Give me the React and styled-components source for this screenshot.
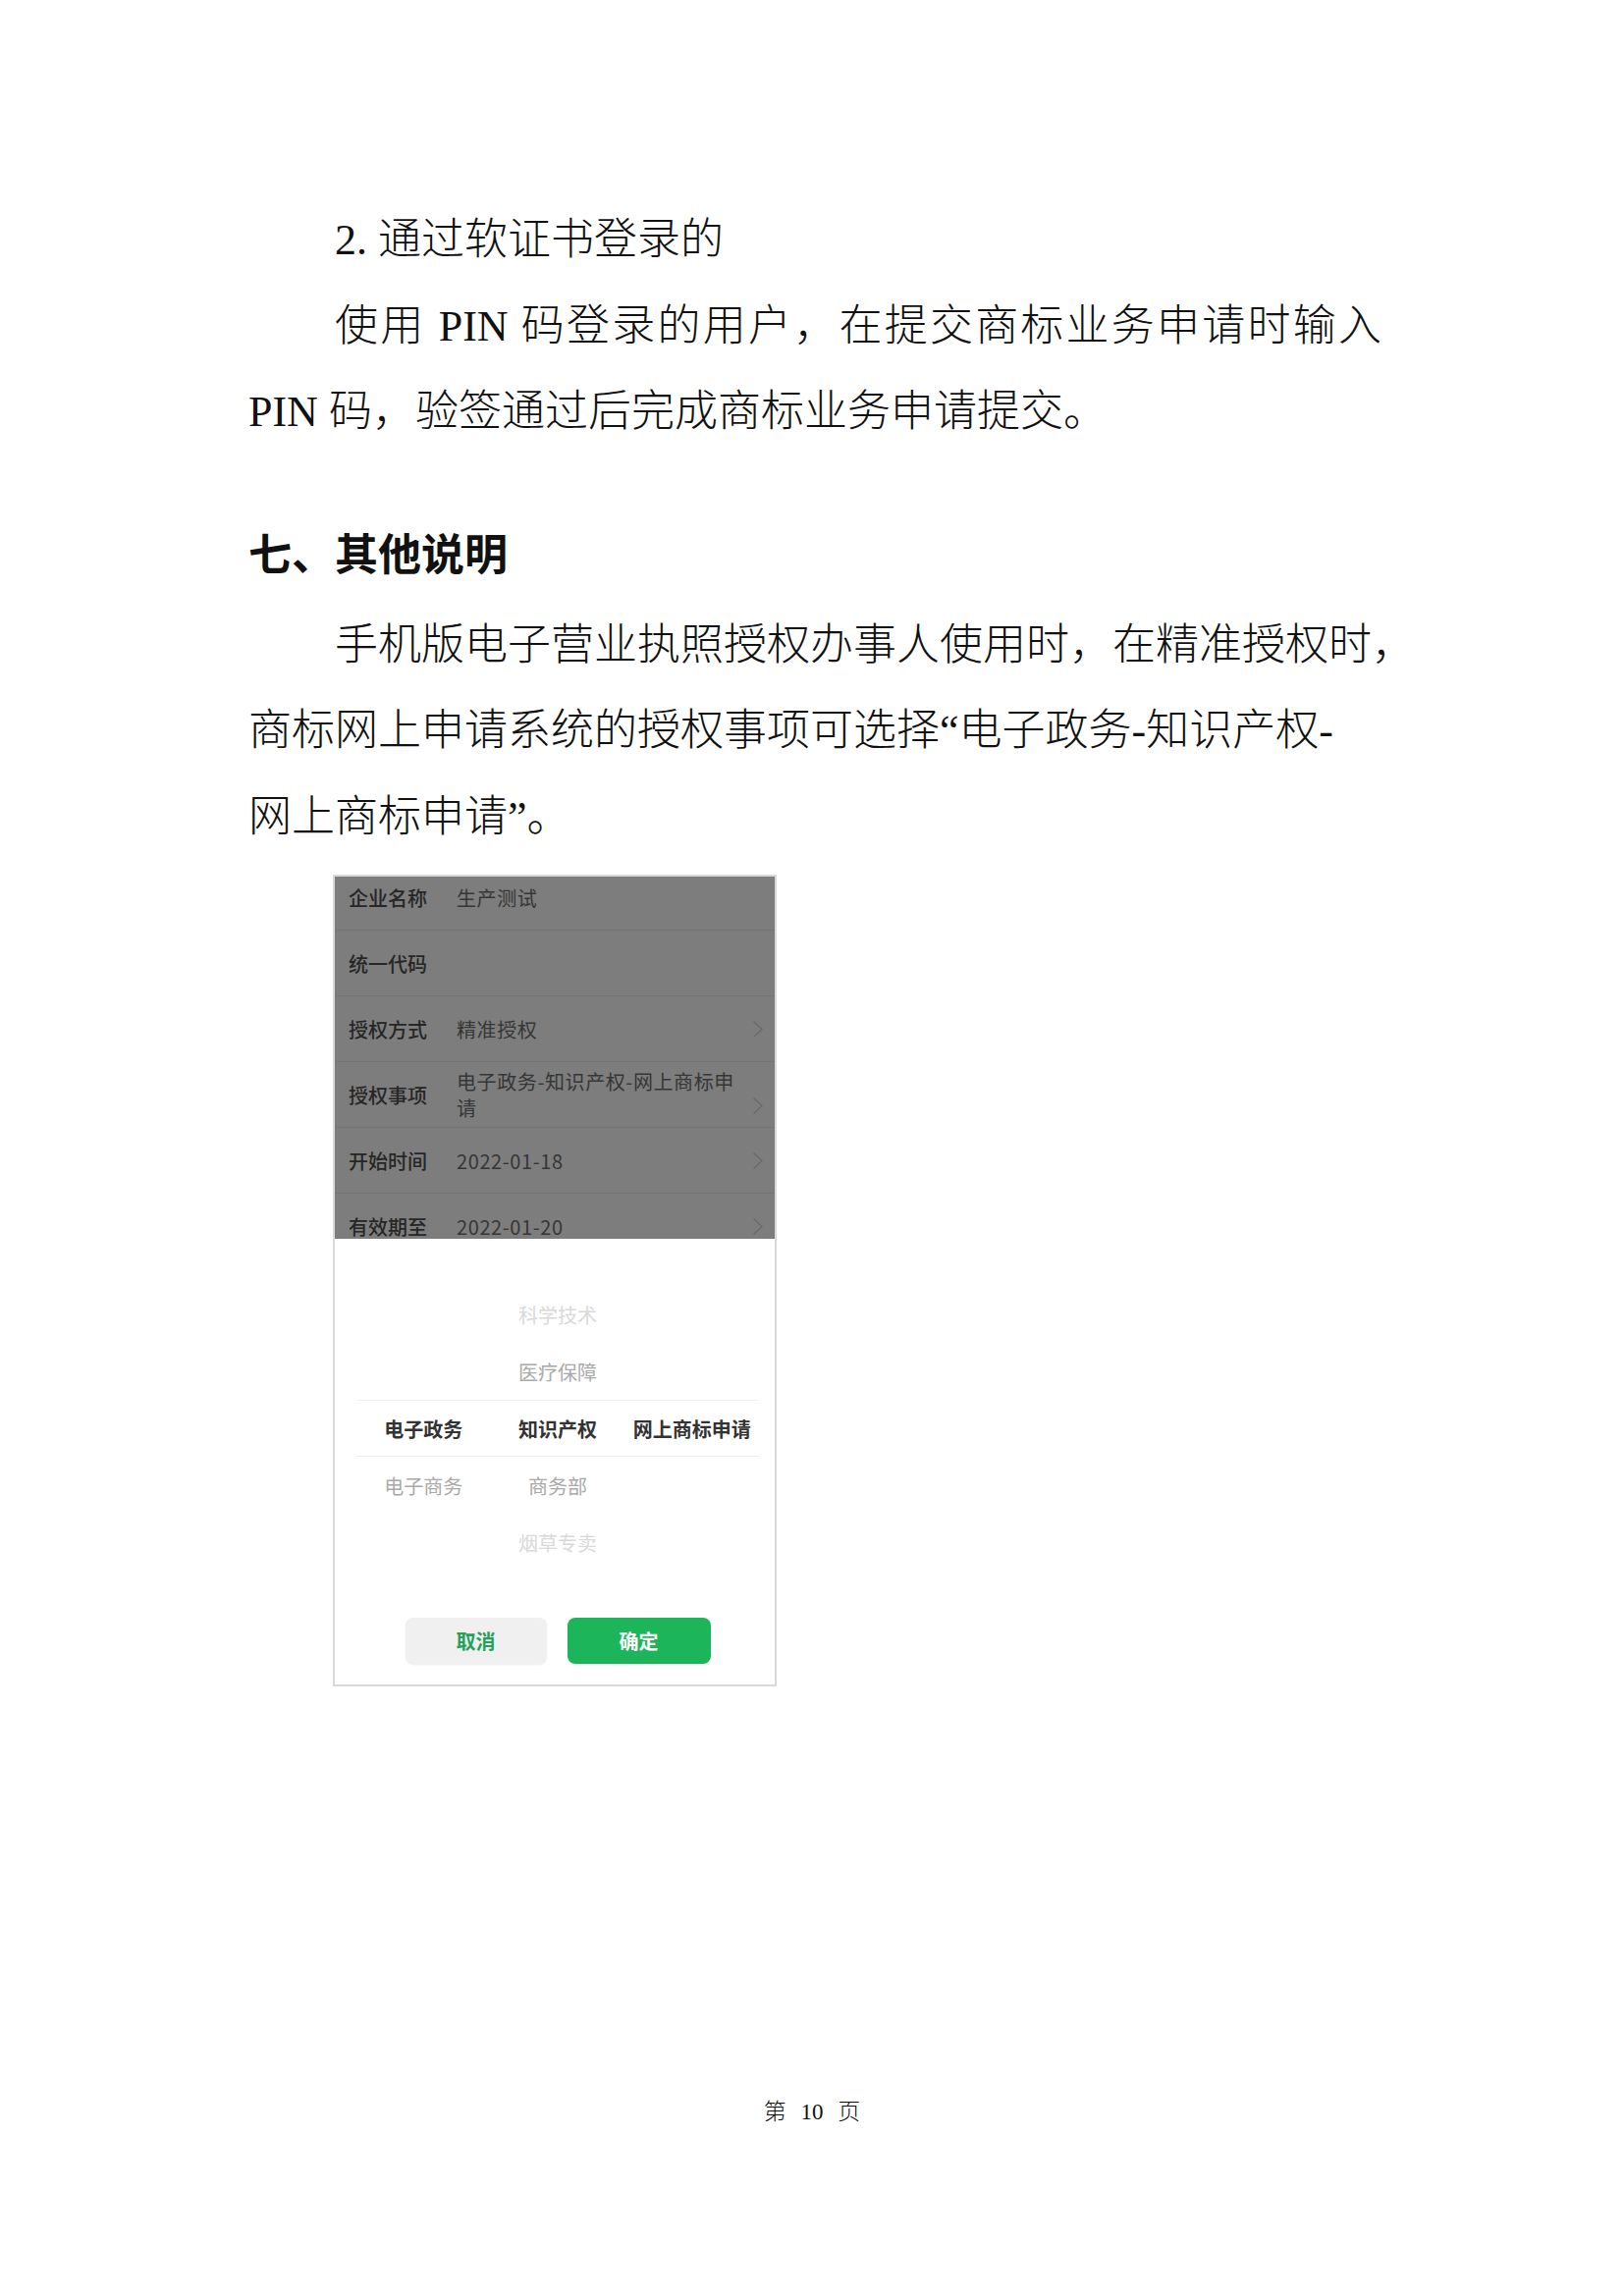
import React from "react";
import styled, { createGlobalStyle } from "styled-components";

const GlobalStyle = createGlobalStyle`
  html, body {
    margin: 0;
    padding: 0;
    background: #ffffff;
  }
  * {
    box-sizing: border-box;
  }
`;

const Page = styled.div`
  width: 1654px;
  min-height: 2339px;
  display: flex;
  flex-direction: column;
  align-items: flex-start;
  padding: 201px 247px 172px 253px;
  background: #ffffff;
  color: #111;
  font-family: "Liberation Serif", "Noto Sans CJK SC", serif;
`;

const TextLine = styled.p`
  margin: 0;
  margin-top: ${(p) => p.$gap || 0}px;
  width: 100%;
  padding-left: ${(p) => (p.$indent ? 88 : 0)}px;
  font-size: 44px;
  font-weight: 300;
  line-height: 87.5px;
  white-space: nowrap;
  text-align: left;
  text-align-last: ${(p) => (p.$justify ? "justify" : "left")};
`;

const Heading = styled.h2`
  margin: 54px 0 0;
  font-family: "Noto Sans CJK SC", sans-serif;
  font-size: 44px;
  font-weight: 700;
  line-height: 88px;
  color: #111;
`;

const Phone = styled.div`
  margin: 15px 0 0 86px;
  width: 452px;
  height: 827px;
  border: 2px solid #d9d9d9;
  display: flex;
  flex-direction: column;
  overflow: hidden;
  background: #fff;
  font-family: "Noto Sans CJK SC", sans-serif;
`;

const FormList = styled.div`
  height: 369px;
  flex-shrink: 0;
  overflow: hidden;
  background: #7d7d7d;
`;

const FormInner = styled.div`
  margin-top: -12px;
  display: flex;
  flex-direction: column;
`;

const FormRow = styled.div`
  height: 67px;
  flex-shrink: 0;
  display: flex;
  align-items: center;
  padding: 0 11px 0 14px;
  border-bottom: 1px solid #747474;
`;

const Label = styled.span`
  width: 110px;
  flex-shrink: 0;
  font-size: 20px;
  font-weight: 500;
  color: #262626;
`;

const Value = styled.span`
  flex: 1;
  font-size: 20px;
  line-height: 27px;
  letter-spacing: 0.6px;
  color: #363636;
`;

const Chevron = styled.svg`
  flex-shrink: 0;
  margin-top: ${(p) => p.$drop || 0}px;
`;

const Sheet = styled.div`
  flex: 1;
  display: flex;
  flex-direction: column;
  padding: 48px 16px 0 22px;
  background: #fff;
`;

const Picker = styled.div`
  display: flex;
  flex-direction: column;
`;

const PickerRow = styled.div`
  height: 58px;
  display: grid;
  grid-template-columns: repeat(3, 1fr);
  align-items: center;
  border-top: 1px solid ${(p) => (p.$selected ? "#eeeeee" : "transparent")};
  border-bottom: 1px solid ${(p) => (p.$selected ? "#eeeeee" : "transparent")};
`;

const shades = ["#333333", "#a9a9a9", "#d9d9d9"];

const PickerCell = styled.span`
  text-align: center;
  font-size: 20px;
  font-weight: ${(p) => (p.$depth === 0 ? 700 : 400)};
  color: ${(p) => shades[p.$depth]};
`;

const Buttons = styled.div`
  margin-top: 48px;
  display: flex;
  justify-content: center;
  gap: 21px;
`;

const Button = styled.button`
  width: ${(p) => (p.$primary ? 146 : 144)}px;
  height: 47px;
  border: none;
  border-radius: 8px;
  font-family: "Noto Sans CJK SC", sans-serif;
  font-size: 20px;
  font-weight: 700;
  background: ${(p) => (p.$primary ? "#1db55a" : "#f0f0f0")};
  color: ${(p) => (p.$primary ? "#ffffff" : "#23a05a")};
  box-shadow: 0 1px 2px rgba(0, 0, 0, 0.08);
`;

const Footer = styled.div`
  margin-top: auto;
  align-self: stretch;
  margin-left: -6px;
  text-align: center;
  font-size: 23px;
  font-weight: 300;
  line-height: 30px;
  word-spacing: 9px;
  color: #111;
`;

const Arrow = ({ drop }) => (
  <Chevron $drop={drop} width="12" height="19" viewBox="0 0 12 19">
    <polyline points="1.5,1.5 10,9.5 1.5,17.5" fill="none" stroke="#6a6a6a" strokeWidth="1.3" />
  </Chevron>
);

const formRows = [
  { label: "企业名称", value: "生产测试" },
  { label: "统一代码", value: "" },
  { label: "授权方式", value: "精准授权", arrow: true },
  { label: "授权事项", value: ["电子政务-知识产权-网上商标申", "请"], arrow: true, drop: 22 },
  { label: "开始时间", value: "2022-01-18", arrow: true },
  { label: "有效期至", value: "2022-01-20", arrow: true },
];

const pickerRows = [
  [null, ["科学技术", 2], null],
  [null, ["医疗保障", 1], null],
  [["电子政务", 0], ["知识产权", 0], ["网上商标申请", 0]],
  [["电子商务", 1], ["商务部", 1], null],
  [null, ["烟草专卖", 2], null],
];

const App = () => {
  return (
    <>
      <GlobalStyle />
      <Page>
        <TextLine $indent>2. 通过软证书登录的</TextLine>
        <TextLine $indent $justify>
          使用 PIN 码登录的用户，在提交商标业务申请时输入
        </TextLine>
        <TextLine>PIN 码，验签通过后完成商标业务申请提交。</TextLine>

        <Heading>七、其他说明</Heading>
        <TextLine $indent $gap={8}>
          手机版电子营业执照授权办事人使用时，在精准授权时，
        </TextLine>
        <TextLine>商标网上申请系统的授权事项可选择“电子政务-知识产权-</TextLine>
        <TextLine>网上商标申请”。</TextLine>

        <Phone>
          <FormList>
            <FormInner>
              {formRows.map((row) => (
                <FormRow key={row.label}>
                  <Label>{row.label}</Label>
                  <Value>
                    {Array.isArray(row.value) ? (
                      <>
                        {row.value[0]}
                        <br />
                        {row.value[1]}
                      </>
                    ) : (
                      row.value
                    )}
                  </Value>
                  {row.arrow && <Arrow drop={row.drop} />}
                </FormRow>
              ))}
            </FormInner>
          </FormList>
          <Sheet>
            <Picker>
              {pickerRows.map((cells, i) => (
                <PickerRow key={i} $selected={i === 2}>
                  {cells.map((cell, j) =>
                    cell ? (
                      <PickerCell key={j} $depth={cell[1]}>
                        {cell[0]}
                      </PickerCell>
                    ) : (
                      <span key={j} />
                    )
                  )}
                </PickerRow>
              ))}
            </Picker>
            <Buttons>
              <Button>取消</Button>
              <Button $primary>确定</Button>
            </Buttons>
          </Sheet>
        </Phone>

        <Footer>第 10 页</Footer>
      </Page>
    </>
  );
};

export default App;
